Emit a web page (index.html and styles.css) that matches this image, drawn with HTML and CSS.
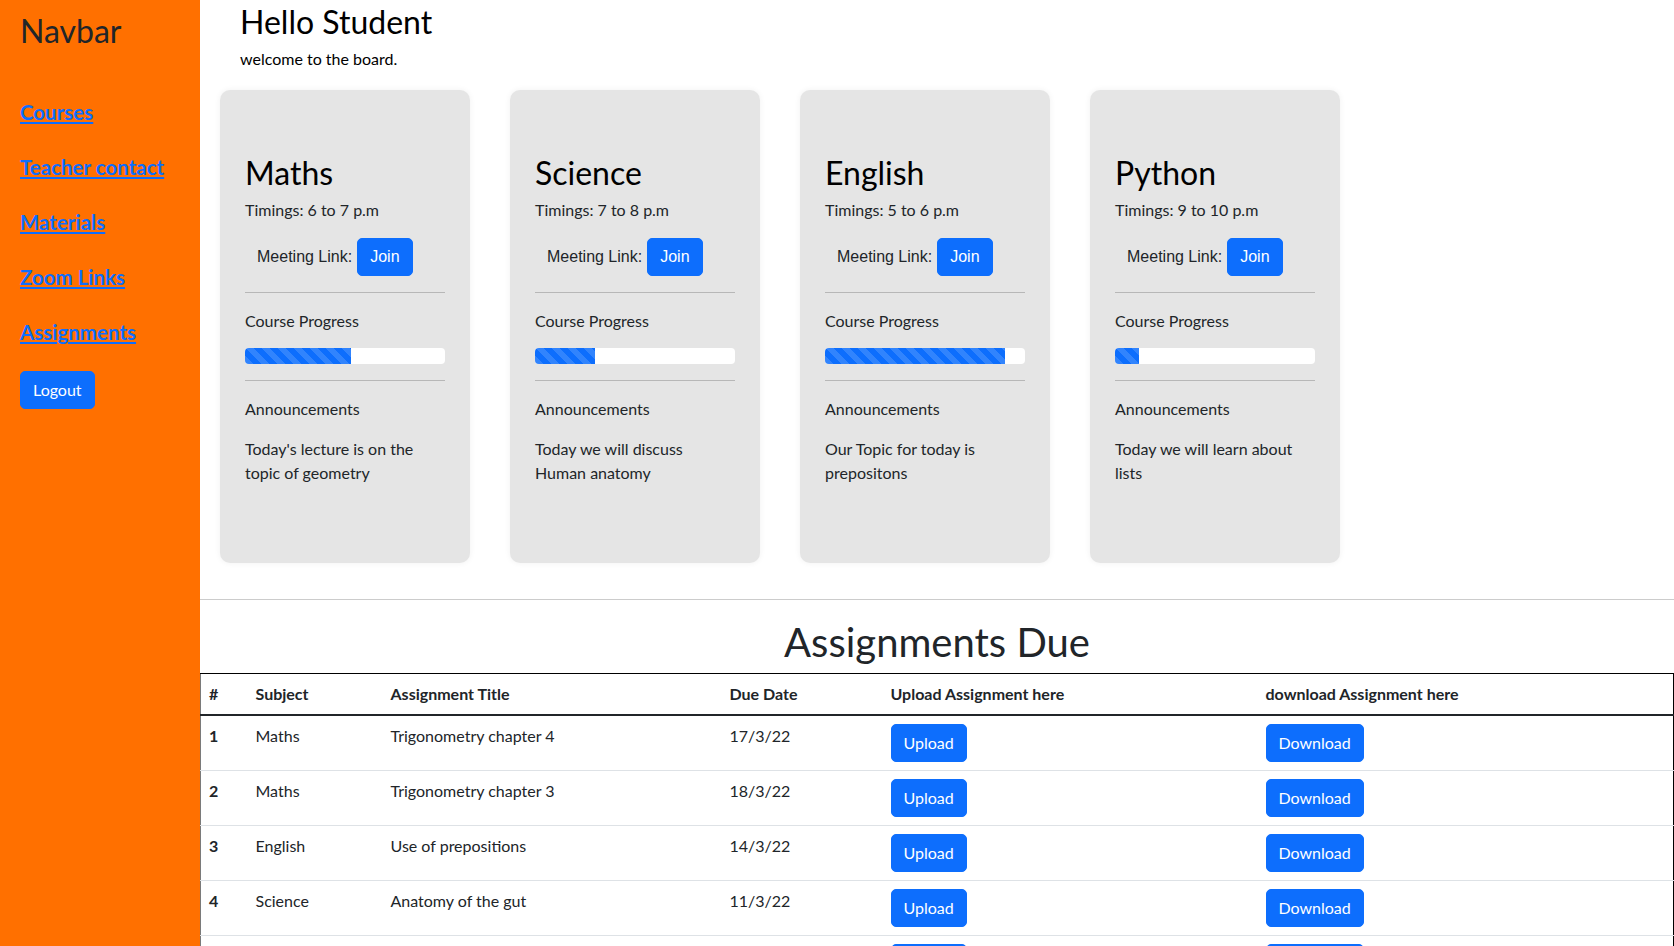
FILE: index.html
```html
<!DOCTYPE html>
<html lang="en">
<head>
<meta charset="utf-8">
<title>Student Board</title>
<link rel="stylesheet" href="styles.css">
</head>
<body>
<div class="layout">
  <aside class="sidebar">
    <div class="brand">Navbar</div>
    <nav class="nav">
      <a href="#">Courses</a>
      <a href="#">Teacher contact</a>
      <a href="#">Materials</a>
      <a href="#">Zoom Links</a>
      <a href="#">Assignments</a>
    </nav>
    <button class="btn logout">Logout</button>
  </aside>
  <main class="main">
    <header class="greeting">
      <h1 class="greeting-title">Hello Student</h1>
      <p class="greeting-text">welcome to the board.</p>
    </header>
    <section class="cards">
      <article class="card">
        <h2 class="card-title">Maths</h2>
        <p class="timing">Timings: 6 to 7 p.m</p>
        <div class="meeting"><span>Meeting Link:</span><button class="btn join">Join</button></div>
        <hr class="card-rule">
        <p class="label">Course Progress</p>
        <div class="progress"><div class="progress-bar" style="width:53%"></div></div>
        <hr class="card-rule">
        <p class="label">Announcements</p>
        <p class="note">Today's lecture is on the topic of geometry</p>
      </article>
      <article class="card">
        <h2 class="card-title">Science</h2>
        <p class="timing">Timings: 7 to 8 p.m</p>
        <div class="meeting"><span>Meeting Link:</span><button class="btn join">Join</button></div>
        <hr class="card-rule">
        <p class="label">Course Progress</p>
        <div class="progress"><div class="progress-bar" style="width:30%"></div></div>
        <hr class="card-rule">
        <p class="label">Announcements</p>
        <p class="note">Today we will discuss Human anatomy</p>
      </article>
      <article class="card">
        <h2 class="card-title">English</h2>
        <p class="timing">Timings: 5 to 6 p.m</p>
        <div class="meeting"><span>Meeting Link:</span><button class="btn join">Join</button></div>
        <hr class="card-rule">
        <p class="label">Course Progress</p>
        <div class="progress"><div class="progress-bar" style="width:90%"></div></div>
        <hr class="card-rule">
        <p class="label">Announcements</p>
        <p class="note">Our Topic for today is prepositons</p>
      </article>
      <article class="card">
        <h2 class="card-title">Python</h2>
        <p class="timing">Timings: 9 to 10 p.m</p>
        <div class="meeting"><span>Meeting Link:</span><button class="btn join">Join</button></div>
        <hr class="card-rule">
        <p class="label">Course Progress</p>
        <div class="progress"><div class="progress-bar" style="width:12%"></div></div>
        <hr class="card-rule">
        <p class="label">Announcements</p>
        <p class="note">Today we will learn about lists</p>
      </article>
    </section>
    <hr class="divider">
    <h2 class="section-title">Assignments Due</h2>
    <table class="assignments">
      <thead>
        <tr>
          <th class="c-num">#</th>
          <th class="c-subject">Subject</th>
          <th class="c-title">Assignment Title</th>
          <th class="c-date">Due Date</th>
          <th class="c-up">Upload Assignment here</th>
          <th class="c-down">download Assignment here</th>
        </tr>
      </thead>
      <tbody>
        <tr>
          <th>1</th><td>Maths</td><td>Trigonometry chapter 4</td><td>17/3/22</td>
          <td><button class="btn">Upload</button></td><td><button class="btn">Download</button></td>
        </tr>
        <tr>
          <th>2</th><td>Maths</td><td>Trigonometry chapter 3</td><td>18/3/22</td>
          <td><button class="btn">Upload</button></td><td><button class="btn">Download</button></td>
        </tr>
        <tr>
          <th>3</th><td>English</td><td>Use of prepositions</td><td>14/3/22</td>
          <td><button class="btn">Upload</button></td><td><button class="btn">Download</button></td>
        </tr>
        <tr>
          <th>4</th><td>Science</td><td>Anatomy of the gut</td><td>11/3/22</td>
          <td><button class="btn">Upload</button></td><td><button class="btn">Download</button></td>
        </tr>
        <tr>
          <th>5</th><td>Python</td><td>Lists and tuples</td><td>20/3/22</td>
          <td><button class="btn">Upload</button></td><td><button class="btn">Download</button></td>
        </tr>
      </tbody>
    </table>
  </main>
</div>
</body>
</html>
```

FILE: styles.css
```css
* { box-sizing: border-box; }

html, body {
  margin: 0;
  padding: 0;
}

body {
  font-family: Lato, "Noto Sans", sans-serif;
  font-size: 16px;
  line-height: 1.5;
  color: #212529;
  background: #fff;
}

.layout {
  display: flex;
  min-height: 100vh;
}

/* Sidebar */
.sidebar {
  width: 200px;
  flex: 0 0 200px;
  background: #ff7000;
  padding: 12px 0 0 20px;
  display: flex;
  flex-direction: column;
  align-items: flex-start;
}

.brand {
  font-size: 32px;
  line-height: 1.2;
  color: #212529;
  font-weight: 400;
}

.nav {
  display: flex;
  flex-direction: column;
  gap: 25px;
  margin-top: 47px;
}

.nav a {
  color: #0d6efd;
  font-weight: 700;
  font-size: 20.5px;
  line-height: 30px;
  text-decoration: underline;
}

.btn {
  font-family: Lato, "Noto Sans", sans-serif;
  font-size: 16px;
  line-height: 24px;
  color: #fff;
  background: #0d6efd;
  border: 1px solid #0d6efd;
  border-radius: 5px;
  padding: 6px 12px;
  cursor: pointer;
}

.logout {
  margin-top: 24px;
}

/* Main */
.main {
  flex: 1;
  min-width: 0;
}

.greeting {
  padding-left: 40px;
}

.greeting-title {
  margin: 3px 0 0;
  font-size: 32px;
  font-weight: 400;
  line-height: 1.2;
  color: #000;
}

.greeting-text {
  margin: 6px 0 0;
  color: #000;
}

.cards {
  display: flex;
  gap: 40px;
  margin: 19px 0 0 20px;
}

.card {
  width: 250px;
  height: 473px;
  background: #e5e5e5;
  border-radius: 10px;
  padding: 25px;
  box-shadow: 0 0 6px rgba(0, 0, 0, 0.06);
}

.card-title {
  margin: 39px 0 0;
  font-size: 32px;
  font-weight: 400;
  line-height: 1.2;
  color: #000;
}

.timing {
  margin: 5px 0 0;
}

.meeting {
  display: flex;
  align-items: center;
  gap: 5px;
  margin-top: 16px;
  padding-left: 12px;
  font-family: "Liberation Sans", Arial, sans-serif;
}

.join {
  font-family: "Liberation Sans", Arial, sans-serif;
}

.card-rule {
  margin: 16px 0 0;
  border: 0;
  border-top: 1px solid #b7b7b7;
}

.label {
  margin: 16px 0 0;
}

.progress {
  margin-top: 15px;
  height: 16px;
  background: #fff;
  border-radius: 4px;
  overflow: hidden;
}

.progress + .card-rule {
  margin-top: 16px;
}

.progress-bar {
  height: 100%;
  background-color: #0d6efd;
  background-image: linear-gradient(45deg,
    rgba(255,255,255,.15) 25%, transparent 25%,
    transparent 50%, rgba(255,255,255,.15) 50%,
    rgba(255,255,255,.15) 75%, transparent 75%, transparent);
  background-size: 16px 16px;
}

.note {
  margin: 16px 0 0;
}

.divider {
  margin: 36px 0 0;
  border: 0;
  border-top: 1px solid #cccccc;
}

.section-title {
  margin: 18px 0 7px;
  text-align: center;
  font-size: 40px;
  font-weight: 400;
  line-height: 1.2;
  color: #212529;
}

/* Table */
.assignments {
  width: 100%;
  border-collapse: collapse;
  border-top: 1px solid #000;
  border-right: 1px solid #000;
  border-left: 1px solid #7a7a7a;
}

.assignments th,
.assignments td {
  text-align: left;
  vertical-align: top;
  padding: 8px;
  line-height: 24px;
}

.assignments thead th {
  font-weight: 700;
  border-bottom: 2px solid #212529;
}

.assignments tbody th {
  font-weight: 700;
}

.assignments tbody tr {
  border-bottom: 1px solid #dee2e6;
}

.c-num { width: 47px; }
.c-subject { width: 135px; }
.c-title { width: 339px; }
.c-date { width: 161px; }
.c-up { width: 375px; }
```
